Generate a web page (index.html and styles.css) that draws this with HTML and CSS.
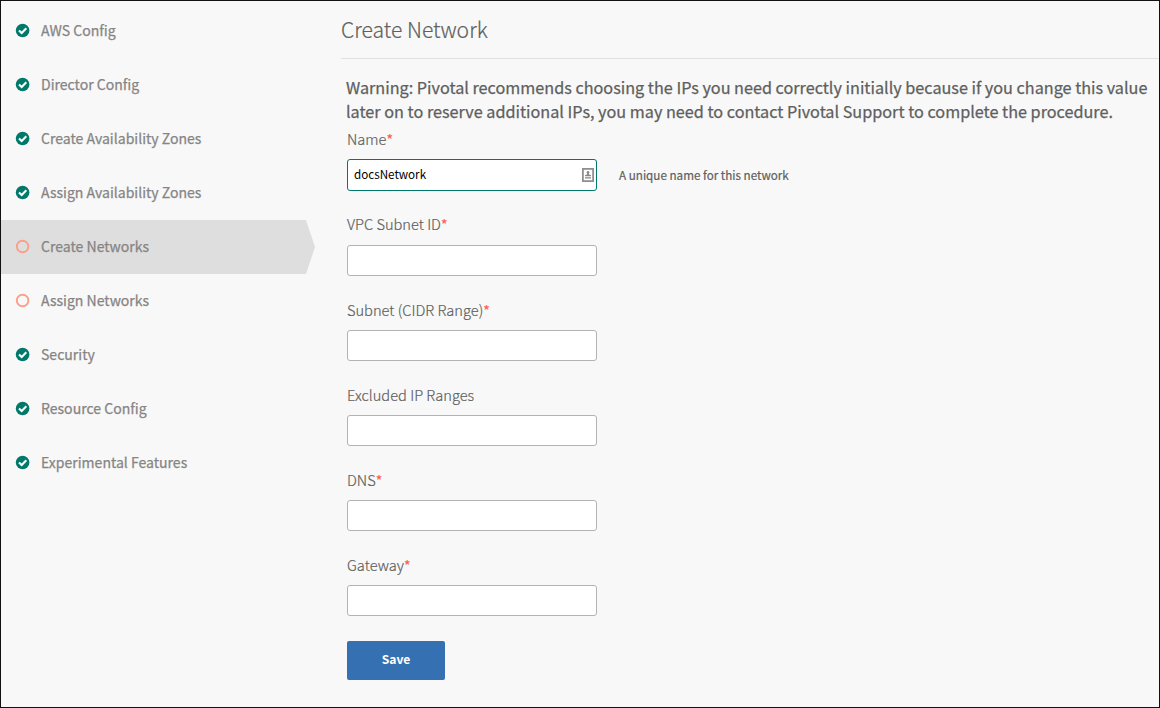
FILE: index.html
```
<!DOCTYPE html>
<html lang="en">
<head>
<meta charset="utf-8">
<title>Create Network</title>
<link rel="stylesheet" href="styles.css">
</head>
<body>
<svg class="defs" width="0" height="0" aria-hidden="true">
  <symbol id="done" viewBox="0 0 14 14">
    <circle cx="6.6" cy="6.5" r="6.8" fill="#00796b"/>
    <path d="M3 6.400 5.700 9l4.600-4.700" fill="none" stroke="#fff" stroke-width="2.1"/>
  </symbol>
  <symbol id="todo" viewBox="0 0 14 14">
    <circle cx="6.6" cy="6.5" r="5.8" fill="none" stroke="#ff9e88" stroke-width="1.9"/>
  </symbol>
</svg>
<div class="window">
  <nav class="steps">
    <a class="step"><svg class="status"><use href="#done"/></svg><span>AWS Config</span></a>
    <a class="step"><svg class="status"><use href="#done"/></svg><span>Director Config</span></a>
    <a class="step"><svg class="status"><use href="#done"/></svg><span>Create Availability Zones</span></a>
    <a class="step"><svg class="status"><use href="#done"/></svg><span>Assign Availability Zones</span></a>
    <a class="step step-active"><svg class="status"><use href="#todo"/></svg><span>Create Networks</span></a>
    <a class="step"><svg class="status"><use href="#todo"/></svg><span>Assign Networks</span></a>
    <a class="step"><svg class="status"><use href="#done"/></svg><span>Security</span></a>
    <a class="step"><svg class="status"><use href="#done"/></svg><span>Resource Config</span></a>
    <a class="step"><svg class="status"><use href="#done"/></svg><span>Experimental Features</span></a>
  </nav>
  <main class="content">
    <h1 class="title">Create Network</h1>
    <p class="warning">Warning: Pivotal recommends choosing the IPs you need correctly initially because if you change this value<br>later on to reserve additional IPs, you may need to contact Pivotal Support to complete the procedure.</p>
    <form class="form">
      <div class="field field-name">
        <label class="label">Name<span class="required">*</span></label>
        <div class="control">
          <div class="input input-focus">
            <span>docsNetwork</span>
            <svg class="autofill" viewBox="0 0 12 14">
              <rect x=".9" y=".9" width="10.200" height="12.200" fill="#fff" stroke="#8a8a8a" stroke-width="1.700"/>
              <circle cx="6" cy="4.300" r="1.300" fill="#888"/>
              <path d="M5.200 5h1.600v1.200L9 7.200v1H3v-1l2.200-1zM3 9.200h6v1.300H3z" fill="#888"/>
            </svg>
          </div>
          <span class="help">A unique name for this network</span>
        </div>
      </div>
      <div class="field field-subnet">
        <label class="label">VPC Subnet ID<span class="required">*</span></label>
        <div class="input"></div>
      </div>
      <div class="field">
        <label class="label">Subnet (CIDR Range)<span class="required">*</span></label>
        <div class="input"></div>
      </div>
      <div class="field">
        <label class="label">Excluded IP Ranges</label>
        <div class="input"></div>
      </div>
      <div class="field">
        <label class="label">DNS<span class="required">*</span></label>
        <div class="input"></div>
      </div>
      <div class="field">
        <label class="label">Gateway<span class="required">*</span></label>
        <div class="input"></div>
      </div>
      <button class="save" type="button">Save</button>
    </form>
  </main>
</div>
</body>
</html>
```

FILE: styles.css
```
* { box-sizing: border-box; }
body {
  margin: 0;
  background: #f8f8f8;
  color: #5e5f5e;
  font-family: "Noto Sans CJK SC", "Open Sans", sans-serif;
}
.defs { display: block; }
.window {
  display: flex;
  height: 708px;
  border: 1px solid #111;
}
.steps {
  flex: none;
  width: 314px;
  padding-top: 3px;
}
.step {
  display: flex;
  align-items: center;
  gap: 11px;
  width: 314px;
  height: 54px;
  padding: 0 0 2px 15px;
  color: #868584;
  font-size: 14.06px;
  line-height: 20px;
  white-space: nowrap;
  -webkit-text-stroke: 0.25px currentColor;
}
.step-active {
  background: #dedede;
  clip-path: polygon(0 0, 305px 0, 100% 50%, 305px 100%, 0 100%);
}
.status {
  width: 14px;
  height: 14px;
  margin-top: 2px;
  overflow: visible;
}
symbol { overflow: visible; }
.content {
  flex: 1;
  padding-left: 26px;
}
.title {
  height: 58px;
  margin: 0;
  border-bottom: 1px solid #e0e0e0;
  font-size: 21.1px;
  font-weight: 300;
  line-height: 57px;
  -webkit-text-stroke: 0.2px currentColor;
}
.warning {
  margin: 16px 0 1px 5px;
  font-size: 16.22px;
  line-height: 24px;
  white-space: nowrap;
  -webkit-text-stroke: 0.25px currentColor;
}
.form { padding-left: 6px; }
.field { height: 85px; }
.field-name { height: 86px; }
.label {
  display: block;
  height: 35px;
  padding-top: 5px;
  font-size: 14.65px;
  font-weight: 300;
  line-height: 20px;
  -webkit-text-stroke: 0.2px currentColor;
}
.field-subnet .label { padding-top: 4px; }
.required {
  color: #ff5b4d;
  font-size: 14px;
  font-weight: 400;
}
.control {
  display: flex;
  align-items: center;
  gap: 22px;
}
.input {
  display: flex;
  align-items: center;
  justify-content: space-between;
  width: 250px;
  height: 31px;
  padding: 0 2px 0 6px;
  border: 1px solid #b3b3b3;
  border-radius: 3px;
  background: #fff;
  color: #000;
  font-size: 11.65px;
}
.input span { padding-bottom: 3px; }
.input-focus {
  height: 32px;
  border-color: #00796b;
}
.autofill { width: 12px; height: 14px; }
.help {
  padding-bottom: 2px;
  font-size: 11.67px;
  -webkit-text-stroke: 0.2px currentColor;
}
.save {
  display: block;
  width: 98px;
  height: 39px;
  margin-top: 6px;
  padding: 0 0 4px;
  border: 0;
  border-radius: 2px;
  background: #3571b2;
  color: #fff;
  font: 700 12.1px "Noto Sans CJK SC", sans-serif;
}
```
